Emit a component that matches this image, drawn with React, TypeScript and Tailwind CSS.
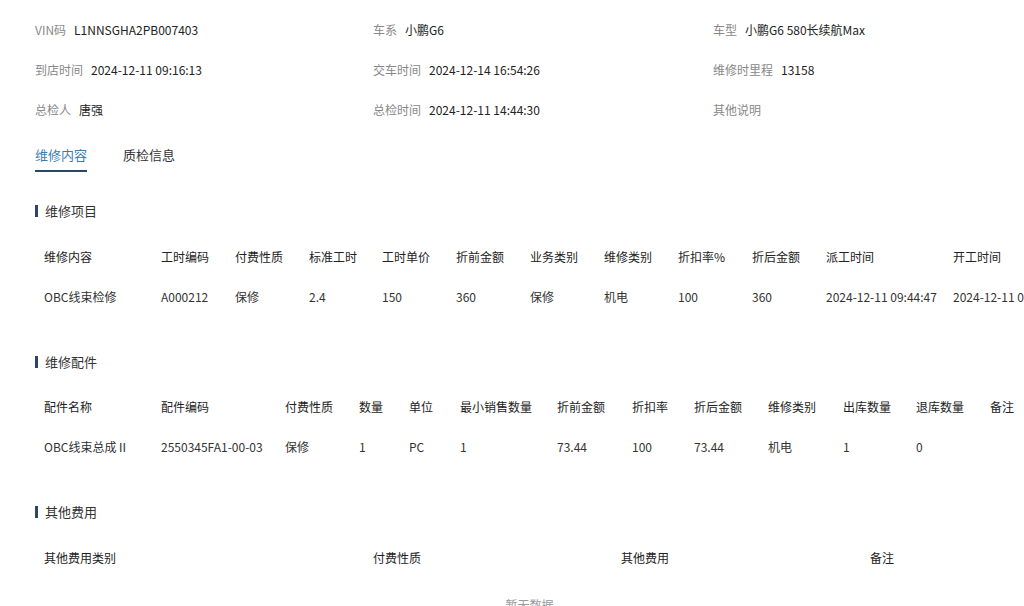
import React from "react";

const info: [string, string][][] = [
  [["VIN码", "L1NNSGHA2PB007403"], ["车系", "小鹏G6"], ["车型", "小鹏G6 580长续航Max"]],
  [["到店时间", "2024-12-11 09:16:13"], ["交车时间", "2024-12-14 16:54:26"], ["维修时里程", "13158"]],
  [["总检人", "唐强"], ["总检时间", "2024-12-11 14:44:30"], ["其他说明", ""]],
];

const t1Widths = [117, 74, 74, 73, 74, 74, 74, 74, 74, 74, 127, 140];
const t1Head = ["维修内容", "工时编码", "付费性质", "标准工时", "工时单价", "折前金额", "业务类别", "维修类别", "折扣率%", "折后金额", "派工时间", "开工时间"];
const t1Row = ["OBC线束检修", "A000212", "保修", "2.4", "150", "360", "保修", "机电", "100", "360", "2024-12-11 09:44:47", "2024-12-11 09:45:02"];

const t2Widths = [117, 124, 74, 50, 51, 97, 75, 62, 74, 75, 73, 74, 80];
const t2Head = ["配件名称", "配件编码", "付费性质", "数量", "单位", "最小销售数量", "折前金额", "折扣率", "折后金额", "维修类别", "出库数量", "退库数量", "备注"];
const t2Row = ["OBC线束总成Ⅱ", "2550345FA1-00-03", "保修", "1", "PC", "1", "73.44", "100", "73.44", "机电", "1", "0", ""];

const t3Widths = [329, 248, 249, 150];
const t3Head = ["其他费用类别", "付费性质", "其他费用", "备注"];

function Table({ widths, head, row }: { widths: number[]; head: string[]; row?: string[] }) {
  return (
    <div className="overflow-hidden">
      <div className="flex h-[40px] items-center text-[12px] text-[#222] whitespace-nowrap">
        {head.map((h, i) => (
          <div key={i} className="shrink-0 pl-[9px] overflow-hidden" style={{ width: widths[i] }}>
            {h}
          </div>
        ))}
      </div>
      {row && (
        <div className="flex h-[40px] items-center text-[12px] text-[#333] whitespace-nowrap">
          {row.map((c, i) => (
            <div key={i} className="shrink-0 pl-[9px] overflow-hidden" style={{ width: widths[i] }}>
              {c}
            </div>
          ))}
        </div>
      )}
    </div>
  );
}

function SectionTitle({ text }: { text: string }) {
  return (
    <div className="flex h-[20px] items-center gap-[7px] text-[13px] text-[#333]">
      <span className="block h-[12px] w-[3px] bg-[#2b4766]" />
      <span>{text}</span>
    </div>
  );
}

export default function App() {
  return (
    <div
      className="h-[606px] w-[1024px] overflow-hidden bg-white pl-[35px] pt-[10px]"
      style={{ fontFamily: '"Noto Sans CJK SC", "Noto Sans", sans-serif' }}
    >
      {info.map((r, ri) => (
        <div key={ri} className="flex h-[40px] items-center text-[12px]">
          {r.map(([l, v], i) => (
            <div key={i} className={`flex shrink-0 items-center gap-[8px] ${i === 0 ? "w-[338px]" : "w-[340px]"}`}>
              <span className="text-[#888]">{l}</span>
              <span className="text-[#222]">{v}</span>
            </div>
          ))}
        </div>
      ))}

      <div className="flex gap-[36px] pt-[15px] text-[13px]">
        <div className="flex flex-col">
          <span className="h-[20px] leading-[20px] text-[#3b7bb0]">维修内容</span>
          <span className="mt-[5px] h-[2px] w-full bg-[#2b4766]" />
        </div>
        <span className="h-[20px] leading-[20px] text-[#333]">质检信息</span>
      </div>

      <div className="mt-[29px]">
        <SectionTitle text="维修项目" />
      </div>
      <div className="mt-[16px]">
        <Table widths={t1Widths} head={t1Head} row={t1Row} />
      </div>

      <div className="mt-[35px]">
        <SectionTitle text="维修配件" />
      </div>
      <div className="mt-[15px]">
        <Table widths={t2Widths} head={t2Head} row={t2Row} />
      </div>

      <div className="mt-[35px]">
        <SectionTitle text="其他费用" />
      </div>
      <div className="mt-[16px]">
        <Table widths={t3Widths} head={t3Head} />
      </div>
      <div className="mt-[18px] text-center text-[12px] text-[#999]">暂无数据</div>
    </div>
  );
}
